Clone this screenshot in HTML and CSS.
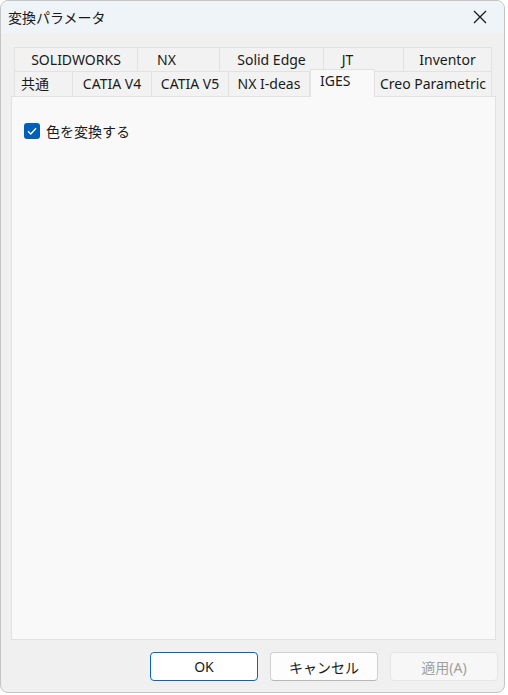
FILE: index.html
```
<!DOCTYPE html>
<html lang="ja">
<head>
    <meta charset="UTF-8">
    <title>変換パラメータ</title>
    <link rel="stylesheet" href="styles.css">
</head>
<body>
    <div class="window">
        <div class="titlebar">
            <span class="title">変換パラメータ</span>
            <span class="close">
                <svg width="14" height="14" viewBox="0 0 14 14"><path d="M1 1 L13 13 M13 1 L1 13" stroke="#1a1a1a" stroke-width="1.3" fill="none"/></svg>
            </span>
        </div>
        <div class="content">
            <div class="tabs">
                <div class="tab-row">
                    <div class="tab w-sw">SOLIDWORKS</div>
                    <div class="tab w-nx">NX</div>
                    <div class="tab w-se">Solid Edge</div>
                    <div class="tab w-jt">JT</div>
                    <div class="tab w-inv">Inventor</div>
                </div>
                <div class="tab-row">
                    <div class="tab left w-com">共通</div>
                    <div class="tab w-v4">CATIA V4</div>
                    <div class="tab w-v5">CATIA V5</div>
                    <div class="tab w-ideas">NX I-deas</div>
                    <div class="tab active w-iges">IGES</div>
                    <div class="tab w-creo">Creo Parametric</div>
                </div>
            </div>
            <div class="panel">
                <label class="check">
                    <span class="box">
                        <svg width="10" height="8" viewBox="0 0 10 8"><path d="M1 4.2 L3.8 7 L9 1.2" stroke="#fff" stroke-width="1.3" fill="none"/></svg>
                    </span>
                    色を変換する
                </label>
            </div>
            <div class="buttons">
                <button class="btn default">OK</button>
                <button class="btn">キャンセル</button>
                <button class="btn disabled">適用(A)</button>
            </div>
        </div>
    </div>
</body>
</html>
```

FILE: styles.css
```
body {
    margin: 0;
    background: #ffffff;
    font-family: "Noto Sans", "Noto Sans CJK JP", sans-serif;
    font-size: 14px;
    color: #1a1a1a;
}
.window {
    width: 505px;
    height: 693px;
    border: 1px solid #c4c4c4;
    border-radius: 8px;
    overflow: hidden;
    background: #f0f0f0;
    display: flex;
    flex-direction: column;
    box-sizing: border-box;
}
.titlebar {
    height: 32px;
    background: #eef4f8;
    display: flex;
    align-items: center;
    justify-content: space-between;
    padding: 0 17px 0 7px;
}
.title {
    font-family: "Noto Sans CJK JP", sans-serif;
    font-size: 14px;
}
.close {
    display: flex;
}
.content {
    flex: 1;
    display: flex;
    flex-direction: column;
    padding: 14px 6px 0 10px;
}
.tabs {
    padding-left: 3px;
}
.tab-row {
    display: flex;
    height: 24px;
}
.tab-row + .tab-row {
    height: 25px;
}
.tab {
    box-sizing: border-box;
    border: 1px solid #e2e2e2;
    border-bottom: none;
    border-left: none;
    background: #f2f2f2;
    text-align: center;
    line-height: 23px;
    font-size: 14px;
    white-space: nowrap;
}
.tab-row .tab:first-child {
    border-left: 1px solid #e2e2e2;
}
.tab.left {
    text-align: left;
    padding-left: 6px;
}
.tab.active {
    background: #f9f9f9;
    margin-top: -2px;
    height: 28px;
    border-left: 1px solid #e2e2e2;
    text-align: left;
    padding-left: 9px;
    line-height: 22px;
    position: relative;
    z-index: 1;
}
.w-sw { width: 124px; }
.w-nx { width: 82px; padding-right: 24px; }
.w-se { width: 104px; }
.w-jt { width: 80px; padding-right: 32px; }
.w-inv { width: 88px; }
.w-com { width: 59px; }
.w-v4 { width: 79px; }
.w-v5 { width: 77px; }
.w-ideas { width: 81px; }
.w-iges { width: 65px; }
.w-creo { width: 117px; }
.panel {
    width: 485px;
    height: 544px;
    box-sizing: border-box;
    background: #f9f9f9;
    border: 1px solid #e2e2e2;
    padding: 24px 12px;
}
.check {
    display: flex;
    align-items: center;
    gap: 6px;
    font-family: "Noto Sans CJK JP", sans-serif;
    font-size: 14px;
}
.box {
    width: 16px;
    height: 16px;
    border-radius: 3px;
    background: #005fb8;
    display: flex;
    align-items: center;
    justify-content: center;
}
.buttons {
    display: flex;
    justify-content: flex-end;
    gap: 12px;
    margin-top: 12px;
}
.btn {
    width: 108px;
    height: 29px;
    border: 1px solid #d0d0d0;
    border-bottom-color: #b8b8b8;
    border-radius: 4px;
    background: #fdfdfd;
    font-family: "Noto Sans", "Noto Sans CJK JP", sans-serif;
    font-size: 14px;
    color: #1a1a1a;
}
.btn.default {
    border: 1px solid #0067c0;
    background: #ffffff;
}
.btn.disabled {
    background: #f7f7f7;
    border-color: #e5e5e5;
    color: #a0a0a0;
}
```
